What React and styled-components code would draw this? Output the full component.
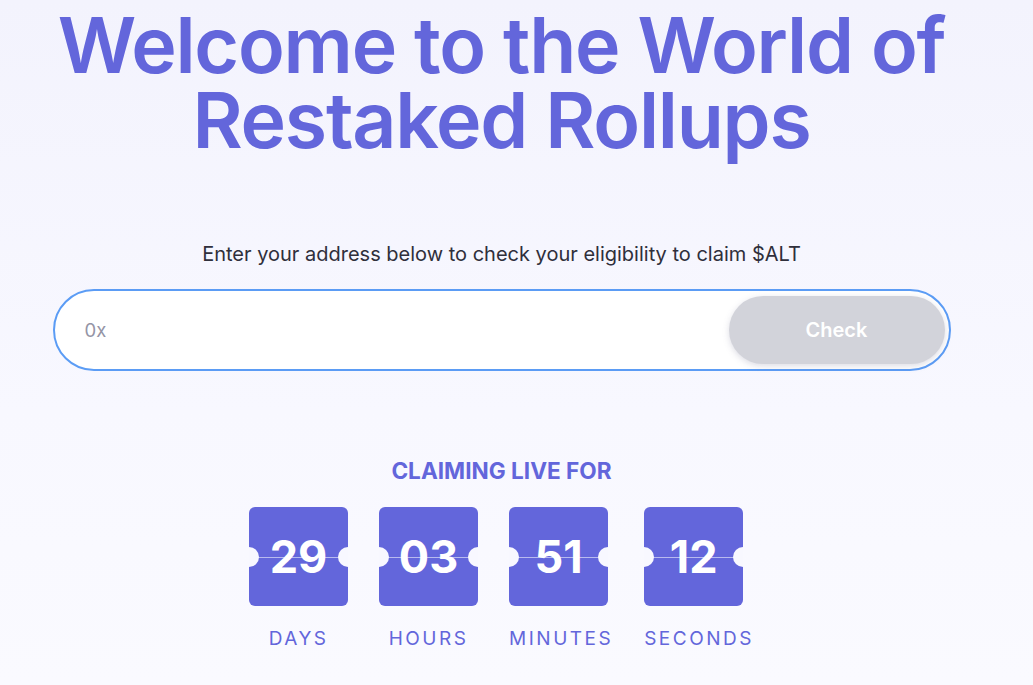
import React from "react";
import styled, { createGlobalStyle } from "styled-components";

const GlobalStyles = createGlobalStyle`
  html, body {
    margin: 0;
    padding: 0;
  }
  body {
    min-height: 100vh;
    background: linear-gradient(180deg, #f3f3fd 0%, #f8f8ff 60%, #fafaff 100%);
    font-family: Inter, "Noto Sans", sans-serif;
  }
  * {
    box-sizing: border-box;
  }
`;

const Page = styled.main`
  display: flex;
  flex-direction: column;
  align-items: center;
  padding: 8px 30px 0 0;
`;

const Title = styled.h1`
  margin: 0;
  font-size: 77px;
  font-weight: 600;
  line-height: 75px;
  letter-spacing: -1.25px;
  color: #6366db;
  text-align: center;
`;

const Intro = styled.p`
  margin: 84px 0 0;
  font-size: 20px;
  color: #2f2f3b;
  text-align: center;
`;

const Field = styled.form`
  display: flex;
  align-items: center;
  width: 898px;
  height: 82px;
  margin-top: 23px;
  padding: 5px 4px 5px 28px;
  background: #fff;
  border: 2px solid #5b9cf5;
  border-radius: 999px;
`;

const AddressInput = styled.input`
  flex: 1;
  border: none;
  outline: none;
  background: transparent;
  font-family: inherit;
  font-size: 18.5px;
  color: #2f2f3b;

  &::placeholder {
    color: #9494a6;
  }
`;

const CheckButton = styled.button`
  width: 216px;
  height: 68px;
  border: none;
  border-radius: 999px;
  background: #d2d3da;
  color: #fff;
  font-family: inherit;
  font-size: 20px;
  font-weight: 600;
  box-shadow: 0 2px 6px rgba(120, 120, 150, 0.25);
  cursor: pointer;
`;

const LiveHeading = styled.h2`
  margin: 86px 0 0;
  font-size: 22.6px;
  font-weight: 700;
  color: #6366db;
  text-transform: uppercase;
`;

const Timer = styled.div`
  display: flex;
  gap: 31px;
  margin-top: 23px;
`;

const Unit = styled.div`
  display: flex;
  flex-direction: column;
`;

const Tile = styled.div`
  position: relative;
  display: flex;
  align-items: center;
  justify-content: center;
  width: 99px;
  height: 99px;
  border-radius: 6px;
  background: #6366db;
  overflow: hidden;

  &::before {
    content: "";
    position: absolute;
    left: 0;
    right: 0;
    top: 50%;
    height: 1px;
    background: rgba(255, 255, 255, 0.55);
  }
`;

const Notch = styled.span`
  position: absolute;
  top: 50%;
  ${(p) => (p.$side === "left" ? "left: -10px;" : "right: -10px;")}
  width: 20px;
  height: 20px;
  margin-top: -10px;
  border-radius: 50%;
  background: #f8f8ff;
`;

const Digits = styled.span`
  position: relative;
  font-size: 45px;
  font-weight: 700;
  color: #fff;
  line-height: 1;
`;

const UnitLabel = styled.span`
  margin-top: 21px;
  font-size: 19px;
  letter-spacing: 2.5px;
  color: #6366db;
  text-align: center;
  text-transform: uppercase;
`;

const countdown = [
  { value: "29", label: "Days" },
  { value: "03", label: "Hours" },
  { value: "51", label: "Minutes" },
  { value: "12", label: "Seconds" },
];

export default function App() {
  return (
    <>
      <GlobalStyles />
      <Page>
        <Title>
          Welcome to the World of
          <br />
          Restaked Rollups
        </Title>
        <Intro>Enter your address below to check your eligibility to claim $ALT</Intro>
        <Field onSubmit={(e) => e.preventDefault()}>
          <AddressInput placeholder="0x" />
          <CheckButton type="submit">Check</CheckButton>
        </Field>
        <LiveHeading>Claiming live for</LiveHeading>
        <Timer>
          {countdown.map((item) => (
            <Unit key={item.label}>
              <Tile>
                <Notch $side="left" />
                <Digits>{item.value}</Digits>
                <Notch $side="right" />
              </Tile>
              <UnitLabel>{item.label}</UnitLabel>
            </Unit>
          ))}
        </Timer>
      </Page>
    </>
  );
}
